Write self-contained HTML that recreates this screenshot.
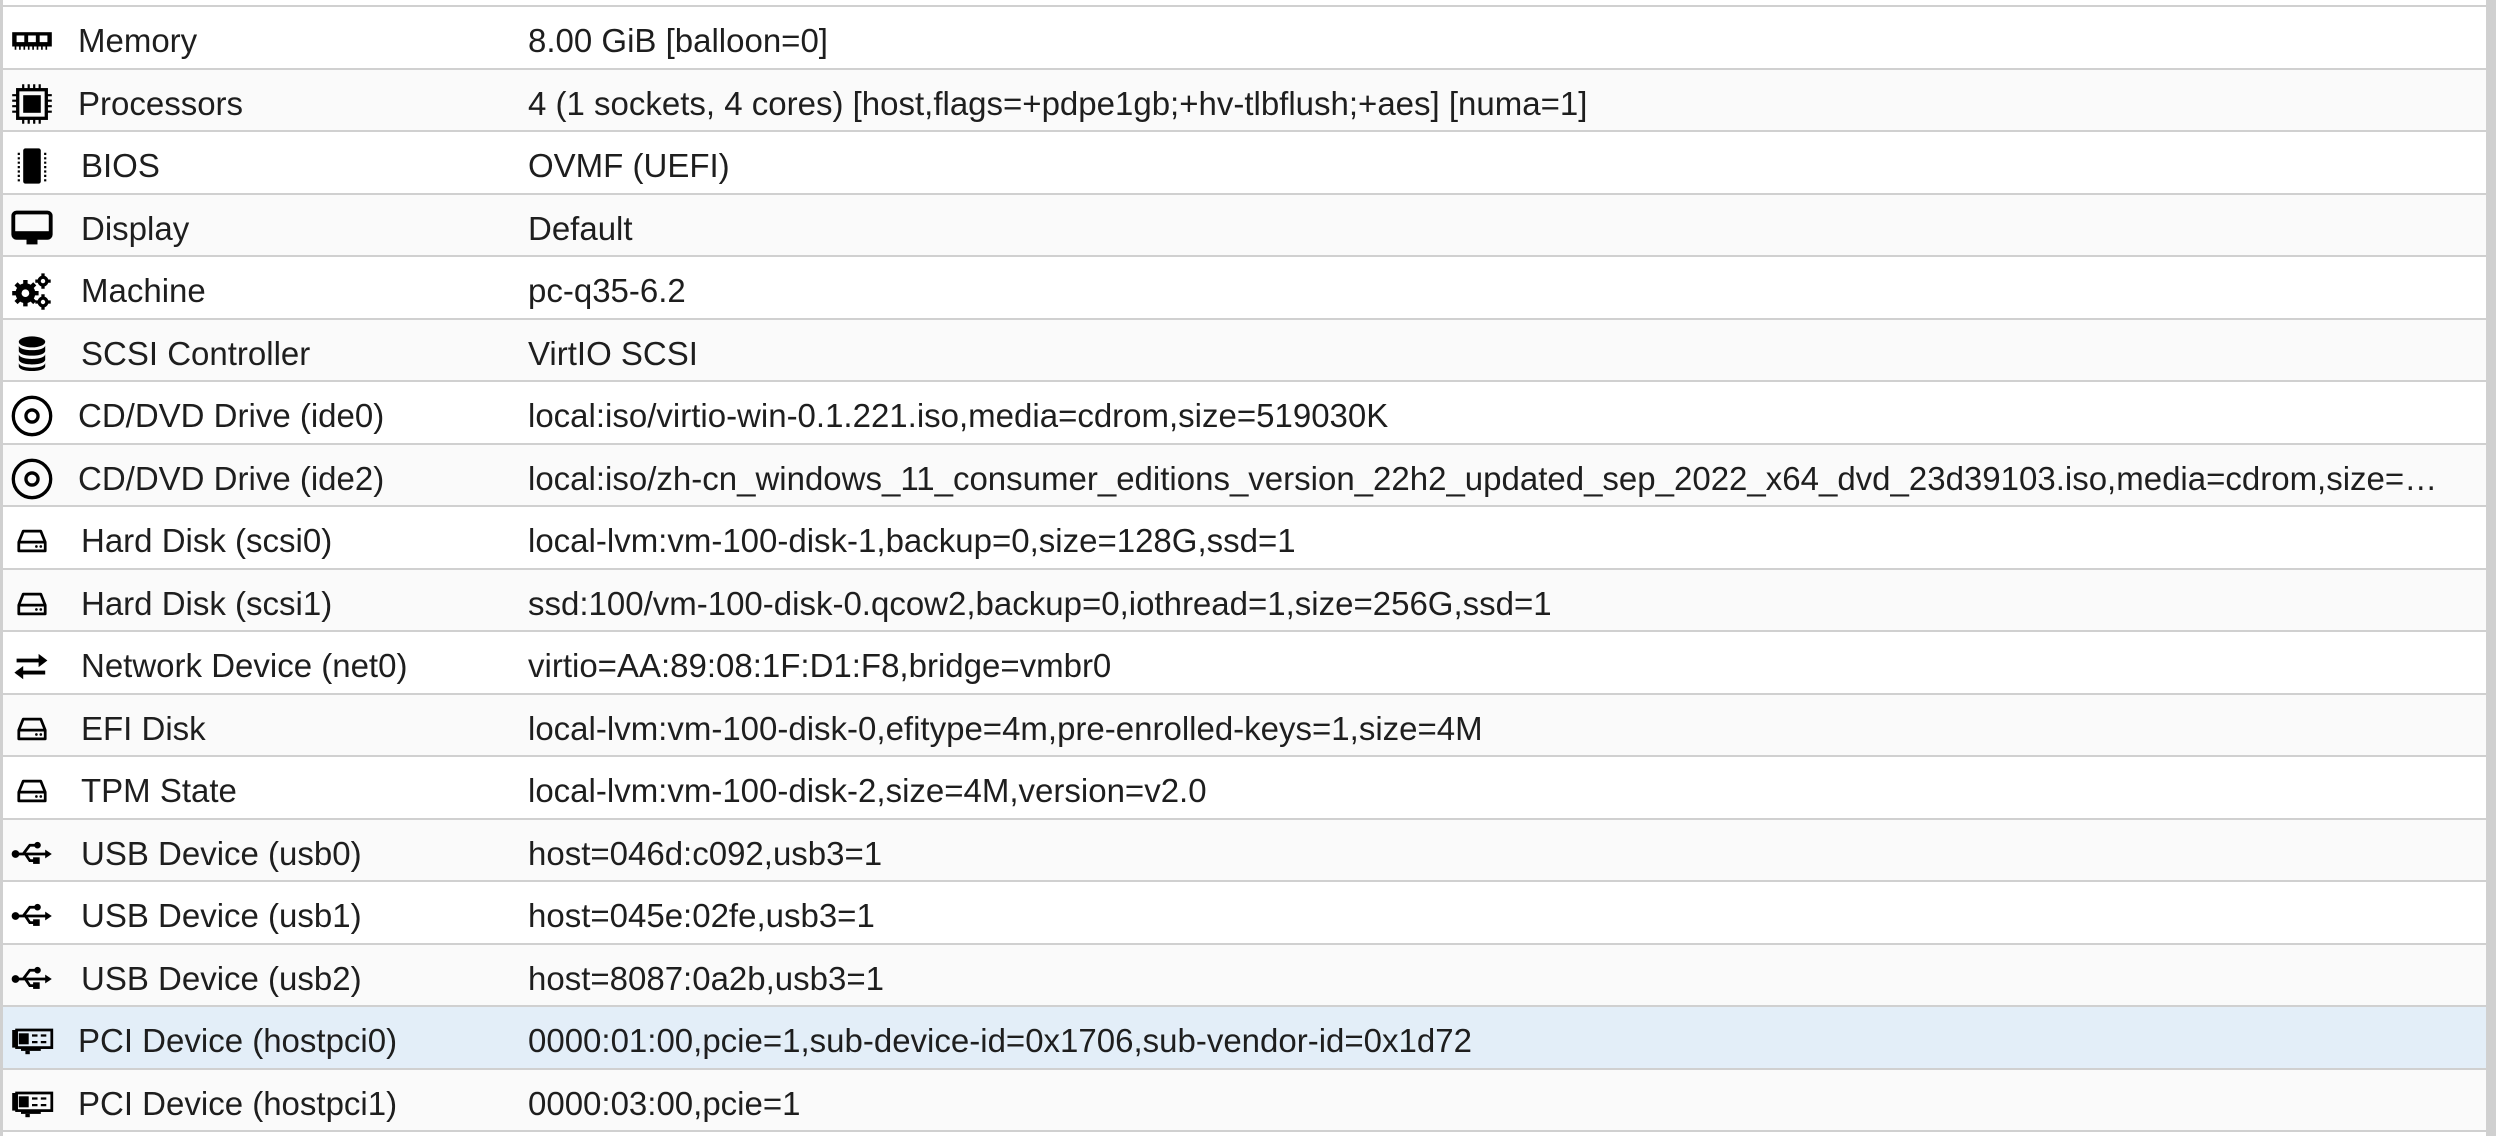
<!DOCTYPE html>
<html><head><meta charset="utf-8"><style>
*{margin:0;padding:0;box-sizing:border-box}
html,body{width:2496px;height:1136px;overflow:hidden;background:#fff}
body{font-family:"Liberation Sans",sans-serif;color:#1e1e1e;position:relative}
.side{position:absolute;left:0;top:0;width:3px;height:1136px;background:#d0d0d0}
.sb{position:absolute;right:0;top:0;width:10px;height:1136px;background:#d0d0d0}
.tbl{position:absolute;left:3px;top:5px;width:2483px;border-top:2px solid #d0d0d0}
.r{height:62.5px;border-bottom:2px solid #d0d0d0;position:relative;font-size:33px;line-height:60px;white-space:nowrap}
.r:nth-child(even){background:#fafafa}
.r.sel{background:#e3eef8}
.ic{position:absolute;left:7px;top:12px;width:44px;height:44px}
.l{position:absolute;left:75px;top:4px}
.v{position:absolute;left:525px;top:4px;width:1925px;overflow:hidden;text-overflow:ellipsis}
</style></head><body>
<div class="side"></div><div class="sb"></div>
<div class="tbl">
<div class="r"><svg class="ic" viewBox="0 0 40 40"><rect x="2" y="12" width="36" height="13" fill="#000"/><rect x="6" y="15" width="7" height="6" fill="#fff"/><rect x="16.5" y="15" width="7" height="6" fill="#fff"/><rect x="27" y="15" width="7" height="6" fill="#fff"/><path d="M5 25v3M9 25v3M13 25v3M17 25v3M21 25v3M25 25v3M29 25v3M33 25v3" stroke="#000" stroke-width="1.5"/></svg><span class="l">Memory</span><span class="v">8.00 GiB [balloon=0]</span></div>
<div class="r"><svg class="ic" viewBox="0 0 40 40"><rect x="7" y="7" width="26" height="26" fill="none" stroke="#000" stroke-width="3"/><rect x="12" y="12" width="16" height="16" fill="#000"/><path d="M12 2v5M17 2v5M22 2v5M27 2v5M12 33v5M17 33v5M22 33v5M27 33v5M2 12h5M2 17h5M2 22h5M2 27h5M33 12h5M33 17h5M33 22h5M33 27h5" stroke="#000" stroke-width="2"/></svg><span class="l">Processors</span><span class="v">4 (1 sockets, 4 cores) [host,flags=+pdpe1gb;+hv-tlbflush;+aes] [numa=1]</span></div>
<div class="r"><svg class="ic" viewBox="0 0 40 40"><rect x="12" y="4" width="16" height="32" rx="2" fill="#000"/><path d="M8 8v26M32 8v26" stroke="#000" stroke-width="2" stroke-dasharray="2 2"/></svg><span class="l" style="left:78px">BIOS</span><span class="v">OVMF (UEFI)</span></div>
<div class="r"><svg class="ic" viewBox="0 0 40 40"><rect x="3" y="5" width="34" height="23" rx="3" fill="none" stroke="#000" stroke-width="3.5"/><rect x="3" y="22" width="34" height="6" fill="#000"/><rect x="15" y="28" width="10" height="6" fill="#000"/></svg><span class="l" style="left:78px">Display</span><span class="v">Default</span></div>
<div class="r"><svg class="ic" viewBox="0 0 40 40"><circle cx="14" cy="22" r="9" fill="#000"/><path d="M14 10v24M2 22h24M5.5 13.5l17 17M5.5 30.5l17-17" stroke="#000" stroke-width="4"/><circle cx="14" cy="22" r="3.5" fill="#fff"/><circle cx="30" cy="11" r="5" fill="#000"/><path d="M30 4v14M23 11h14" stroke="#000" stroke-width="3"/><circle cx="30" cy="11" r="2" fill="#fff"/><circle cx="30" cy="30" r="5" fill="#000"/><path d="M30 23v14M23 30h14" stroke="#000" stroke-width="3"/><circle cx="30" cy="30" r="2" fill="#fff"/></svg><span class="l" style="left:78px">Machine</span><span class="v">pc-q35-6.2</span></div>
<div class="r"><svg class="ic" viewBox="0 0 40 40"><ellipse cx="20" cy="9" rx="12" ry="5" fill="#000"/><path d="M8 12c0 6 24 6 24 0v5c0 6-24 6-24 0zM8 20c0 6 24 6 24 0v5c0 6-24 6-24 0zM8 28c0 6 24 6 24 0v3c0 6-24 6-24 0z" fill="#000"/></svg><span class="l" style="left:78px">SCSI Controller</span><span class="v">VirtIO SCSI</span></div>
<div class="r"><svg class="ic" viewBox="0 0 40 40"><circle cx="20" cy="20" r="17" fill="none" stroke="#000" stroke-width="3"/><circle cx="20" cy="20" r="5.5" fill="none" stroke="#000" stroke-width="3"/></svg><span class="l">CD/DVD Drive (ide0)</span><span class="v">local:iso/virtio-win-0.1.221.iso,media=cdrom,size=519030K</span></div>
<div class="r"><svg class="ic" viewBox="0 0 40 40"><circle cx="20" cy="20" r="17" fill="none" stroke="#000" stroke-width="3"/><circle cx="20" cy="20" r="5.5" fill="none" stroke="#000" stroke-width="3"/></svg><span class="l">CD/DVD Drive (ide2)</span><span class="v">local:iso/zh-cn_windows_11_consumer_editions_version_22h2_updated_sep_2022_x64_dvd_23d39103.iso,media=cdrom,size=5471232K</span></div>
<div class="r"><svg class="ic" viewBox="0 0 40 40"><path d="M8 21l4-10h16l4 10v8H8z" fill="none" stroke="#000" stroke-width="2.5" stroke-linejoin="round"/><path d="M8 21h24" stroke="#000" stroke-width="2.5"/><circle cx="24" cy="25" r="1.2"/><circle cx="28" cy="25" r="1.2"/></svg><span class="l" style="left:78px">Hard Disk (scsi0)</span><span class="v">local-lvm:vm-100-disk-1,backup=0,size=128G,ssd=1</span></div>
<div class="r"><svg class="ic" viewBox="0 0 40 40"><path d="M8 21l4-10h16l4 10v8H8z" fill="none" stroke="#000" stroke-width="2.5" stroke-linejoin="round"/><path d="M8 21h24" stroke="#000" stroke-width="2.5"/><circle cx="24" cy="25" r="1.2"/><circle cx="28" cy="25" r="1.2"/></svg><span class="l" style="left:78px">Hard Disk (scsi1)</span><span class="v">ssd:100/vm-100-disk-0.qcow2,backup=0,iothread=1,size=256G,ssd=1</span></div>
<div class="r"><svg class="ic" viewBox="0 0 40 40"><path d="M6 15h22M6 26h26" stroke="#000" stroke-width="3.5"/><path d="M34 15l-8-6v12zM4 26l8-6v12z" fill="#000"/></svg><span class="l" style="left:78px">Network Device (net0)</span><span class="v">virtio=AA:89:08:1F:D1:F8,bridge=vmbr0</span></div>
<div class="r"><svg class="ic" viewBox="0 0 40 40"><path d="M8 21l4-10h16l4 10v8H8z" fill="none" stroke="#000" stroke-width="2.5" stroke-linejoin="round"/><path d="M8 21h24" stroke="#000" stroke-width="2.5"/><circle cx="24" cy="25" r="1.2"/><circle cx="28" cy="25" r="1.2"/></svg><span class="l" style="left:78px">EFI Disk</span><span class="v">local-lvm:vm-100-disk-0,efitype=4m,pre-enrolled-keys=1,size=4M</span></div>
<div class="r"><svg class="ic" viewBox="0 0 40 40"><path d="M8 21l4-10h16l4 10v8H8z" fill="none" stroke="#000" stroke-width="2.5" stroke-linejoin="round"/><path d="M8 21h24" stroke="#000" stroke-width="2.5"/><circle cx="24" cy="25" r="1.2"/><circle cx="28" cy="25" r="1.2"/></svg><span class="l" style="left:78px">TPM State</span><span class="v">local-lvm:vm-100-disk-2,size=4M,version=v2.0</span></div>
<div class="r"><svg class="ic" viewBox="0 0 40 40"><circle cx="5" cy="20" r="3.5"/><path d="M5 20h28M12 20l6-8h5M14 20l4 6h4" stroke="#000" stroke-width="2.5" fill="none"/><circle cx="25" cy="12" r="3"/><rect x="21" y="23" width="6" height="6"/><path d="M38 20l-6-4v8z"/></svg><span class="l" style="left:78px">USB Device (usb0)</span><span class="v">host=046d:c092,usb3=1</span></div>
<div class="r"><svg class="ic" viewBox="0 0 40 40"><circle cx="5" cy="20" r="3.5"/><path d="M5 20h28M12 20l6-8h5M14 20l4 6h4" stroke="#000" stroke-width="2.5" fill="none"/><circle cx="25" cy="12" r="3"/><rect x="21" y="23" width="6" height="6"/><path d="M38 20l-6-4v8z"/></svg><span class="l" style="left:78px">USB Device (usb1)</span><span class="v">host=045e:02fe,usb3=1</span></div>
<div class="r"><svg class="ic" viewBox="0 0 40 40"><circle cx="5" cy="20" r="3.5"/><path d="M5 20h28M12 20l6-8h5M14 20l4 6h4" stroke="#000" stroke-width="2.5" fill="none"/><circle cx="25" cy="12" r="3"/><rect x="21" y="23" width="6" height="6"/><path d="M38 20l-6-4v8z"/></svg><span class="l" style="left:78px">USB Device (usb2)</span><span class="v">host=8087:0a2b,usb3=1</span></div>
<div class="r sel"><svg class="ic" viewBox="0 0 40 40"><path d="M2 10h4v16H2z"/><rect x="6" y="10" width="32" height="16" fill="none" stroke="#000" stroke-width="2.5"/><rect x="8" y="13" width="9" height="10"/><path d="M20 15h5M28 15h5M20 21h5M28 21h5" stroke="#000" stroke-width="2"/><rect x="10" y="26" width="18" height="3"/><rect x="14" y="29" width="4" height="3"/></svg><span class="l">PCI Device (hostpci0)</span><span class="v">0000:01:00,pcie=1,sub-device-id=0x1706,sub-vendor-id=0x1d72</span></div>
<div class="r"><svg class="ic" viewBox="0 0 40 40"><path d="M2 10h4v16H2z"/><rect x="6" y="10" width="32" height="16" fill="none" stroke="#000" stroke-width="2.5"/><rect x="8" y="13" width="9" height="10"/><path d="M20 15h5M28 15h5M20 21h5M28 21h5" stroke="#000" stroke-width="2"/><rect x="10" y="26" width="18" height="3"/><rect x="14" y="29" width="4" height="3"/></svg><span class="l">PCI Device (hostpci1)</span><span class="v">0000:03:00,pcie=1</span></div>
</div>
</body></html>
